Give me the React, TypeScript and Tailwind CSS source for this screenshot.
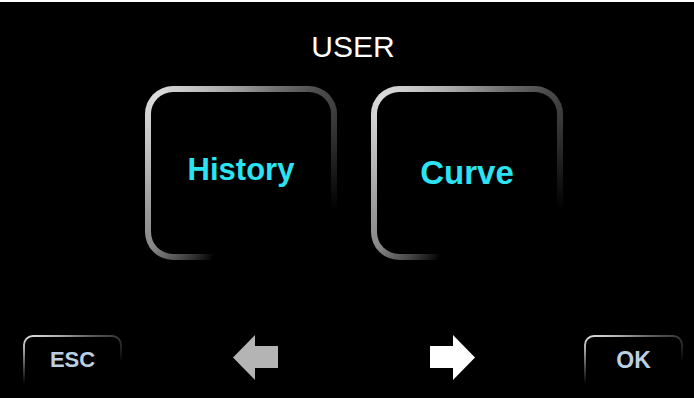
import React from "react";

function Arrow({ dir, color }: { dir: "left" | "right"; color: string }) {
  const pts =
    dir === "left"
      ? "0,22.5 22,0 22,11 45,11 45,33 22,33 22,45"
      : "45,22.5 23,0 23,11 0,11 0,33 23,33 23,45";
  return (
    <svg width="45" height="45" viewBox="0 0 45 45" className="shrink-0">
      <polygon points={pts} fill={color} />
    </svg>
  );
}

export default function App() {
  return (
    <div className="w-[694px] h-[398px] bg-black border-t-2 border-white flex flex-col overflow-hidden font-['Liberation_Sans',Arial,sans-serif]">
      <div className="mt-[30px] h-[30px] leading-[30px] text-[30px] text-white text-center pl-[12px]">
        USER
      </div>

      <div className="mt-[24px] flex gap-[34px] pl-[145px]">
        <div className="w-[192px] h-[174px] rounded-[28px] p-[6px] bg-[conic-gradient(from_0deg,#9a9a9a_0deg,#4a4a4a_45deg,#000_112deg,#000_198deg,#888_230deg,#dcdcdc_312deg,#9a9a9a_360deg)]">
          <div className="h-full rounded-[22px] bg-black flex items-center justify-center pb-[6px]">
            <span className="text-[31px] leading-[36px] font-bold text-[#2be3f2]">History</span>
          </div>
        </div>
        <div className="w-[192px] h-[174px] rounded-[28px] p-[6px] bg-[conic-gradient(from_0deg,#9a9a9a_0deg,#4a4a4a_45deg,#000_112deg,#000_198deg,#888_230deg,#dcdcdc_312deg,#9a9a9a_360deg)]">
          <div className="h-full rounded-[22px] bg-black flex items-center justify-center">
            <span className="text-[33px] leading-[38px] font-bold text-[#2be3f2]">Curve</span>
          </div>
        </div>
      </div>

      <div className="mt-[75px] flex items-start pl-[23px] h-[63px]">
        <div className="w-[99px] h-[63px] shrink-0 rounded-[10px] p-[2px] bg-[conic-gradient(from_0deg,#8a8a8a_0deg,#3a3a3a_58deg,#000_85deg,#000_250deg,#555_272deg,#dddddd_302deg,#8a8a8a_360deg)]">
          <div className="h-full rounded-[8px] bg-black flex justify-center pt-[12px]">
            <span className="text-[22px] leading-[22px] font-bold text-[#bccfe2]">ESC</span>
          </div>
        </div>
        <div className="ml-[111px]">
          <Arrow dir="left" color="#b4b4b4" />
        </div>
        <div className="ml-[152px]">
          <Arrow dir="right" color="#ffffff" />
        </div>
        <div className="ml-[109px] w-[99px] h-[63px] shrink-0 rounded-[10px] p-[2px] bg-[conic-gradient(from_0deg,#8a8a8a_0deg,#3a3a3a_58deg,#000_85deg,#000_250deg,#555_272deg,#dddddd_302deg,#8a8a8a_360deg)]">
          <div className="h-full rounded-[8px] bg-black flex justify-center pt-[12px]">
            <span className="text-[23px] leading-[22px] font-bold text-[#bccfe2]">OK</span>
          </div>
        </div>
      </div>
    </div>
  );
}
